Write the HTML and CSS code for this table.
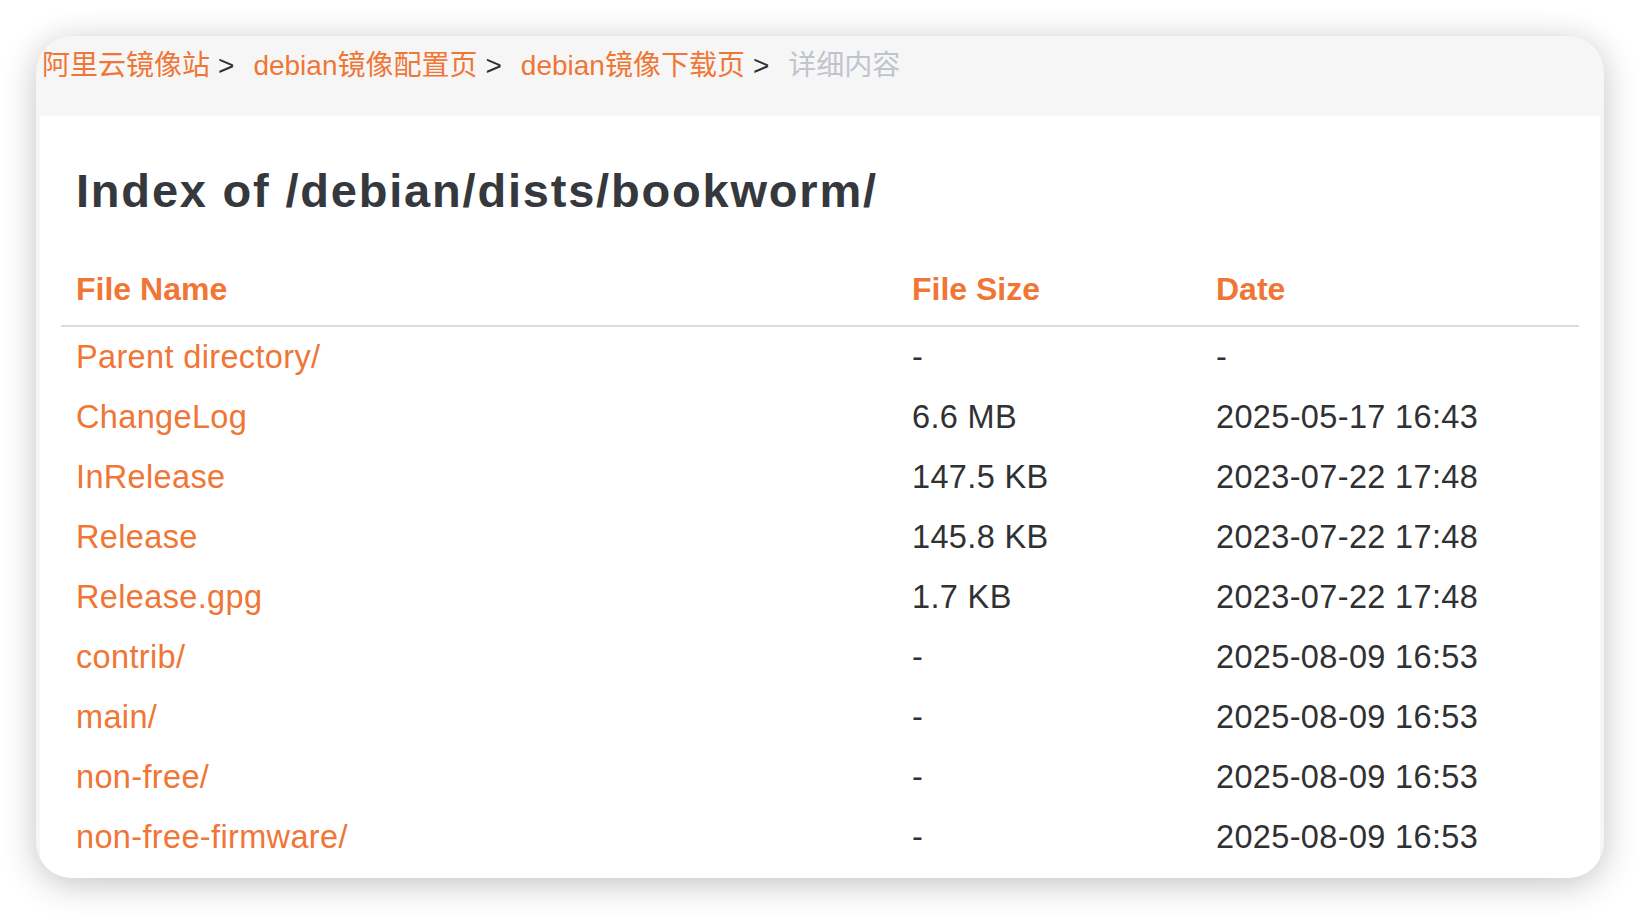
FILE: index.html
```html
<!DOCTYPE html>
<html lang="zh-CN">
<head>
<meta charset="utf-8">
<title>Index of /debian/dists/bookworm/</title>
<link rel="stylesheet" href="styles.css">
</head>
<body>
<div class="card">
  <nav class="crumbs">
    <a class="crumb" href="#">阿里云镜像站</a><span class="sep">&gt;</span>
    <a class="crumb" href="#">debian镜像配置页</a><span class="sep">&gt;</span>
    <a class="crumb" href="#">debian镜像下载页</a><span class="sep">&gt;</span>
    <span class="crumb current">详细内容</span>
  </nav>
  <main class="panel">
    <h1 class="title">Index of /debian/dists/bookworm/</h1>
    <table class="listing">
      <colgroup><col class="c-name"><col class="c-size"><col class="c-date"></colgroup>
      <thead>
        <tr><th>File Name</th><th>File Size</th><th>Date</th></tr>
      </thead>
      <tbody>
        <tr><td><a href="#">Parent directory/</a></td><td>-</td><td>-</td></tr>
        <tr><td><a href="#">ChangeLog</a></td><td>6.6 MB</td><td>2025-05-17 16:43</td></tr>
        <tr><td><a href="#">InRelease</a></td><td>147.5 KB</td><td>2023-07-22 17:48</td></tr>
        <tr><td><a href="#">Release</a></td><td>145.8 KB</td><td>2023-07-22 17:48</td></tr>
        <tr><td><a href="#">Release.gpg</a></td><td>1.7 KB</td><td>2023-07-22 17:48</td></tr>
        <tr><td><a href="#">contrib/</a></td><td>-</td><td>2025-08-09 16:53</td></tr>
        <tr><td><a href="#">main/</a></td><td>-</td><td>2025-08-09 16:53</td></tr>
        <tr><td><a href="#">non-free/</a></td><td>-</td><td>2025-08-09 16:53</td></tr>
        <tr><td><a href="#">non-free-firmware/</a></td><td>-</td><td>2025-08-09 16:53</td></tr>
      </tbody>
    </table>
  </main>
</div>
</body>
</html>
```

FILE: styles.css
```css
html, body {
  margin: 0;
  padding: 0;
  background: #ffffff;
}

body {
  padding: 36px;
  font-family: "Liberation Sans", "Noto Sans CJK SC", sans-serif;
  color: #303133;
}

.card {
  width: 1568px;
  background: #f6f6f6;
  border-radius: 36px;
  overflow: hidden;
  box-shadow: 0 6px 34px rgba(0, 0, 0, 0.24);
  display: flex;
  flex-direction: column;
}

.crumbs {
  height: 80px;
  box-sizing: border-box;
  padding: 10px 0 0 6px;
  display: flex;
  align-items: flex-start;
  font-size: 28px;
  line-height: 40px;
  white-space: nowrap;
}

.crumb {
  color: #f07636;
  text-decoration: none;
}

.crumb.current {
  color: #c0c4cc;
}

.sep {
  color: #303133;
  margin: 0 19px 0 8px;
}

.panel {
  margin: 0 4px;
  background: #ffffff;
  padding: 47px 21px 11px;
}

.title {
  margin: 0;
  padding: 0 15px;
  font-size: 47px;
  line-height: 56px;
  font-weight: 700;
  letter-spacing: 1.8px;
  color: #35383d;
}

.listing {
  margin-top: 48px;
  width: 100%;
  border-collapse: collapse;
  table-layout: fixed;
}

.c-name { width: 836px; }
.c-size { width: 304px; }
.c-date { width: 378px; }

.listing th {
  text-align: left;
  font-size: 32px;
  line-height: 44px;
  font-weight: 700;
  color: #f07636;
  padding: 0 15px 14px;
  border-bottom: 2px solid #dcdcdc;
}

.listing td {
  font-size: 32.5px;
  line-height: 60px;
  letter-spacing: 0.35px;
  padding: 0 15px;
  color: #303133;
  white-space: nowrap;
}

.listing td a {
  color: #f07636;
  text-decoration: none;
}
```
